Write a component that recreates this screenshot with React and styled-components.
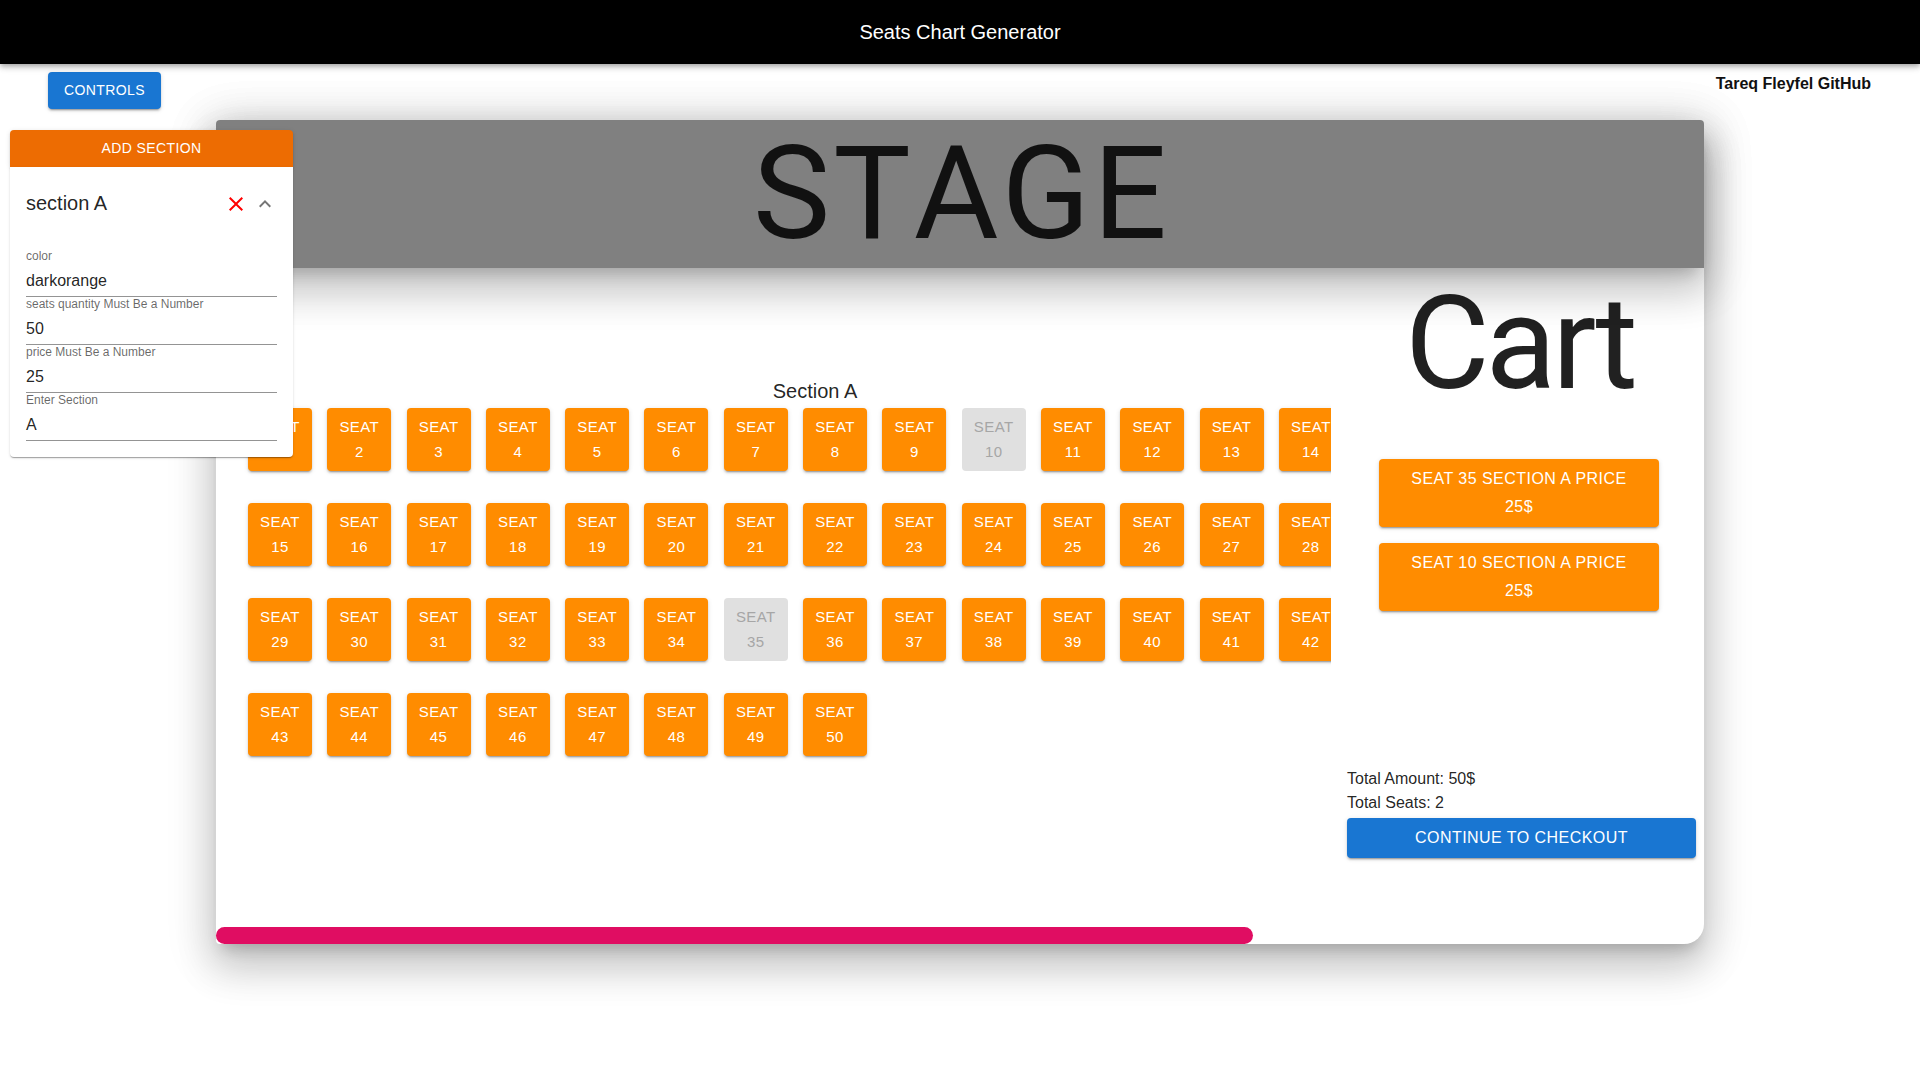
import React from 'react'
import styled, { createGlobalStyle } from 'styled-components'
import { MdClose, MdExpandLess } from 'react-icons/md'

const shadow = {
  button:
    '0px 3px 1px -2px rgba(0,0,0,0.2), 0px 2px 2px 0px rgba(0,0,0,0.14), 0px 1px 5px 0px rgba(0,0,0,0.12)',
  paper:
    '0px 2px 1px -1px rgba(0,0,0,0.2), 0px 1px 1px 0px rgba(0,0,0,0.14), 0px 1px 3px 0px rgba(0,0,0,0.12)',
  bar: '0px 2px 4px -1px rgba(0,0,0,0.2), 0px 4px 5px 0px rgba(0,0,0,0.14), 0px 1px 10px 0px rgba(0,0,0,0.12)',
  high: '0px 11px 15px -7px rgba(0,0,0,0.2), 0px 24px 38px 3px rgba(0,0,0,0.14), 0px 9px 46px 8px rgba(0,0,0,0.12)',
}

const GlobalStyle = createGlobalStyle`
  body {
    margin: 0;
    background: #fff;
    font-family: "Liberation Sans", Arial, sans-serif;
    color: rgba(0, 0, 0, 0.87);
  }
  * { box-sizing: border-box; }
`

const seats = Array.from({ length: 50 }, (_, i) => i + 1)
const taken = [10, 35]
const cart = [
  { seat: 35, section: 'A', price: 25 },
  { seat: 10, section: 'A', price: 25 },
]
const fields = [
  { label: 'color', value: 'darkorange' },
  { label: 'seats quantity Must Be a Number', value: '50' },
  { label: 'price Must Be a Number', value: '25' },
  { label: 'Enter Section', value: 'A' },
]

const App = () => {
  return (
    <Page>
      <GlobalStyle />
      <AppBar>Seats Chart Generator</AppBar>
      <TopBar>
        <Button $color='#1976d2' $size={14}>
          Controls
        </Button>
        <GithubLink>Tareq Fleyfel GitHub</GithubLink>
      </TopBar>

      <Card>
        <Stage>STAGE</Stage>
        <Body>
          <SeatsViewport>
            <SectionBlock>
              <SectionTitle>Section A</SectionTitle>
              <SeatGrid>
                {seats.map((n) => (
                  <Seat key={n} $disabled={taken.includes(n)}>
                    <span>SEAT</span>
                    <span>{n}</span>
                  </Seat>
                ))}
              </SeatGrid>
            </SectionBlock>
          </SeatsViewport>
          <CartColumn>
            <CartTitle>Cart</CartTitle>
            <CartList>
              {cart.map((c) => (
                <CartItem key={c.seat} $color='darkorange' $size={16}>
                  <span>
                    Seat {c.seat} Section {c.section} Price
                  </span>
                  <span>{c.price}$</span>
                </CartItem>
              ))}
            </CartList>
            <TotalLine>Total Amount: 50$</TotalLine>
            <TotalLine>Total Seats: 2</TotalLine>
            <Checkout $color='#1976d2' $size={16}>
              Continue to checkout
            </Checkout>
          </CartColumn>
        </Body>
        <ScrollTrack>
          <ScrollThumb />
        </ScrollTrack>
      </Card>

      <ControlPanel>
        <AddSection $color='#ed6c02' $size={14}>
          Add Section
        </AddSection>
        <Accordion>
          <Summary>
            <SummaryTitle>section A</SummaryTitle>
            <IconBox $color='red'>
              <MdClose />
            </IconBox>
            <IconBox $color='rgba(0,0,0,0.54)'>
              <MdExpandLess />
            </IconBox>
          </Summary>
          <Details>
            {fields.map((f) => (
              <Field key={f.label}>
                <FieldLabel>{f.label}</FieldLabel>
                <FieldValue>{f.value}</FieldValue>
              </Field>
            ))}
          </Details>
        </Accordion>
      </ControlPanel>
    </Page>
  )
}

const Page = styled.div`
  position: relative;
  min-height: 1080px;
  overflow: hidden;
`

const AppBar = styled.header`
  position: relative;
  z-index: 5;
  height: 64px;
  line-height: 64px;
  background: #000;
  color: #fff;
  font-size: 20px;
  text-align: center;
  box-shadow: ${shadow.bar};
`

const TopBar = styled.div`
  display: flex;
  justify-content: space-between;
  align-items: flex-start;
  padding: 8px 49px 0 48px;
`

const Button = styled.button`
  border: 0;
  border-radius: 4px;
  padding: 6px 16px;
  background: ${(p) => p.$color};
  color: #fff;
  font-family: "Liberation Sans", Arial, sans-serif;
  font-size: ${(p) => p.$size}px;
  line-height: 1.75;
  letter-spacing: 0.02857em;
  text-transform: uppercase;
  box-shadow: ${shadow.button};
  cursor: pointer;
`

const GithubLink = styled.a`
  margin-top: 1px;
  color: #111;
  font-size: 16px;
  font-weight: bold;
  line-height: 22px;
  text-decoration: none;
`

const Card = styled.main`
  width: 1488px;
  margin: 11px auto 0;
  background: #fff;
  border-radius: 4px 4px 20px 4px;
  box-shadow: ${shadow.high};
`

const Stage = styled.div`
  position: relative;
  z-index: 1;
  height: 148px;
  padding-left: 3px;
  background: #808080;
  border-radius: 4px 4px 0 0;
  color: rgba(0, 0, 0, 0.87);
  font-family: Roboto, "Liberation Sans", sans-serif;
  font-size: 130px;
  line-height: 148px;
  letter-spacing: 3px;
  font-kerning: none;
  text-align: center;
  box-shadow: ${shadow.high};
`

const Body = styled.div`
  display: flex;
  height: 659px;
`

const SeatsViewport = styled.div`
  flex-shrink: 0;
  width: 1115px;
  padding-top: 112px;
  overflow: hidden;
`

const SectionBlock = styled.section`
  width: 1166px;
  padding-left: 32px;
`

const SectionTitle = styled.div`
  font-size: 20px;
  line-height: 23px;
  text-align: center;
  margin-bottom: 5px;
`

const SeatGrid = styled.div`
  display: grid;
  grid-template-columns: repeat(14, 64px);
  column-gap: 15.3px;
  row-gap: 32px;
`

const Seat = styled.button`
  width: 64px;
  height: 63px;
  padding: 6px 0;
  border: 0;
  border-radius: 4px;
  display: flex;
  flex-direction: column;
  align-items: center;
  justify-content: center;
  background: ${(p) => (p.$disabled ? '#e0e0e0' : 'darkorange')};
  color: ${(p) => (p.$disabled ? '#a6a6a6' : '#fff')};
  box-shadow: ${(p) => (p.$disabled ? 'none' : shadow.button)};
  font-family: "Liberation Sans", Arial, sans-serif;
  font-size: 15px;
  line-height: 25px;
  letter-spacing: 0.02857em;
`

const CartColumn = styled.aside`
  width: 349px;
  margin-left: 16px;
  display: flex;
  flex-direction: column;
`

const CartTitle = styled.h1`
  margin: 0;
  padding-right: 4px;
  font-family: Roboto, "Liberation Sans", sans-serif;
  font-size: 130px;
  font-weight: 400;
  line-height: 152px;
  letter-spacing: -4px;
  text-align: center;
`

const CartList = styled.div`
  height: 308px;
  margin-top: 39px;
  padding-right: 5px;
  display: flex;
  flex-direction: column;
  align-items: center;
  gap: 16px;
`

const CartItem = styled(Button)`
  width: 280px;
  display: flex;
  flex-direction: column;
  align-items: center;
  background: darkorange;
`

const TotalLine = styled.div`
  font-size: 16px;
  line-height: 24px;
`

const Checkout = styled(Button)`
  width: 100%;
  margin-top: 3px;
`

const ScrollTrack = styled.div`
  height: 17px;
`

const ScrollThumb = styled.div`
  width: 1037px;
  height: 100%;
  background: #e00d62;
  border-radius: 9px;
`

const ControlPanel = styled.div`
  position: absolute;
  z-index: 10;
  top: 130px;
  left: 10px;
  width: 283px;
`

const AddSection = styled(Button)`
  display: block;
  width: 100%;
  border-radius: 4px 4px 0 0;
  padding: 6px 16px;
`

const Accordion = styled.div`
  background: #fff;
  border-radius: 0 0 4px 4px;
  box-shadow: ${shadow.paper};
`

const Summary = styled.div`
  height: 74px;
  padding: 0 16px;
  display: flex;
  align-items: center;
  gap: 5px;
`

const SummaryTitle = styled.div`
  flex: 1;
  font-size: 20px;
`

const IconBox = styled.span`
  display: flex;
  width: 24px;
  height: 24px;
  color: ${(p) => p.$color};
  svg {
    width: 24px;
    height: 24px;
  }
`

const Details = styled.div`
  padding: 8px 16px 16px;
`

const Field = styled.div`
  display: flex;
  flex-direction: column;
`

const FieldLabel = styled.label`
  font-size: 12px;
  line-height: 14px;
  color: rgba(0, 0, 0, 0.6);
`

const FieldValue = styled.div`
  padding: 8px 0 5px;
  font-size: 16px;
  line-height: 20px;
  border-bottom: 1px solid rgba(0, 0, 0, 0.42);
`

export default App
